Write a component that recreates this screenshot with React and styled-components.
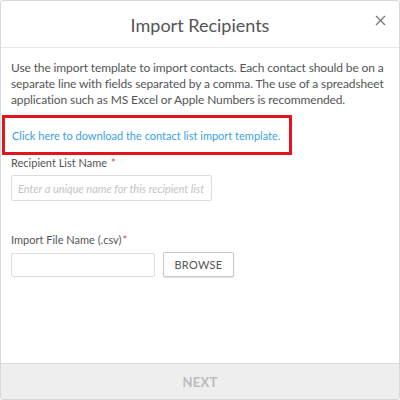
import styled, { createGlobalStyle } from 'styled-components';

const GlobalStyle = createGlobalStyle`
  html, body {
    margin: 0;
    padding: 0;
    background: #fff;
  }
  body {
    font-family: Lato, 'Open Sans', sans-serif;
  }
`;

const Modal = styled.div`
  width: 400px;
  height: 400px;
  box-sizing: border-box;
  display: flex;
  flex-direction: column;
  background: #fff;
  border: 1px solid #d8d8d8;
  border-radius: 3px;
  overflow: hidden;
`;

const Header = styled.div`
  position: relative;
  height: 46px;
  display: flex;
  align-items: center;
  justify-content: center;
  border-bottom: 1px solid #e8e8e8;
`;

const Title = styled.h1`
  margin: 0;
  font-size: 18px;
  font-weight: 400;
  color: #555;
  padding-top: 2px;
`;

const Close = styled.button`
  position: absolute;
  top: 11px;
  right: 11px;
  width: 16px;
  height: 16px;
  padding: 0;
  border: none;
  background: none;
  display: flex;
  align-items: center;
  justify-content: center;
`;

const Body = styled.div`
  flex: 1;
  padding: 12px 10px 0 10px;
`;

const Intro = styled.p`
  margin: 0;
  font-size: 12px;
  line-height: 16px;
  letter-spacing: -0.12px;
  color: #555;
`;

const Highlight = styled.div`
  margin: 7px 0 0 -9px;
  width: 290px;
  height: 40px;
  box-sizing: border-box;
  border: 3px solid #e3141b;
  display: flex;
  align-items: center;
  padding-left: 7px;
`;

const Link = styled.a`
  font-size: 11px;
  color: #3a9fe0;
  text-decoration: none;
  cursor: pointer;
`;

const Field = styled.div`
  margin-top: ${(p) => p.$top}px;
  display: flex;
  flex-direction: column;
  gap: 6px;
`;

const Label = styled.label`
  font-size: 11px;
  color: #555;
`;

const Req = styled.span`
  color: #e2464b;
  margin-left: ${(p) => (p.$tight ? 1 : 4)}px;
`;

const Row = styled.div`
  display: flex;
  gap: 8px;
  align-items: center;
`;

const Input = styled.input`
  width: ${(p) => p.$w}px;
  height: ${(p) => p.$h}px;
  box-sizing: border-box;
  border: 1px solid #ddd;
  border-radius: 2px;
  padding: 0 6px;
  font-family: Lato, sans-serif;
  font-size: 11px;
  color: #555;
  outline: none;
  &::placeholder {
    color: #c4c4c4;
    font-style: italic;
  }
`;

const Browse = styled.button`
  width: 71px;
  height: 25px;
  border: 1px solid #c9c9c9;
  border-radius: 2px;
  background: #fff;
  font-family: Lato, sans-serif;
  font-size: 11px;
  color: #555;
  letter-spacing: 0.3px;
  box-shadow: 0 1px 1px rgba(0, 0, 0, 0.12);
`;

const Footer = styled.button`
  height: 36px;
  border: none;
  border-top: 1px solid #dcdcdc;
  background: #eee;
  font-family: Lato, sans-serif;
  font-size: 13px;
  font-weight: 700;
  color: #bcbcbc;
  letter-spacing: 0.3px;
`;

export default function App() {
  return (
    <>
      <GlobalStyle />
      <Modal>
        <Header>
          <Title>Import Recipients</Title>
          <Close aria-label="close">
            <svg width="11" height="11" viewBox="0 0 11 11">
              <path d="M1 1L10 10M10 1L1 10" stroke="#777" strokeWidth="1.3" />
            </svg>
          </Close>
        </Header>
        <Body>
          <Intro>
            Use the import template to import contacts. Each contact should be on a separate line
            with fields separated by a comma. The use of a spreadsheet application such as MS Excel
            or Apple Numbers is recommended.
          </Intro>
          <Highlight>
            <Link>Click here to download the contact list import template.</Link>
          </Highlight>
          <Field $top={1}>
            <Label>
              Recipient List Name<Req>*</Req>
            </Label>
            <Input $w={201} $h={26} placeholder="Enter a unique name for this recipient list" />
          </Field>
          <Field $top={32}>
            <Label>
              Import File Name (.csv)<Req $tight>*</Req>
            </Label>
            <Row>
              <Input $w={144} $h={24} />
              <Browse>BROWSE</Browse>
            </Row>
          </Field>
        </Body>
        <Footer disabled>NEXT</Footer>
      </Modal>
    </>
  );
}
